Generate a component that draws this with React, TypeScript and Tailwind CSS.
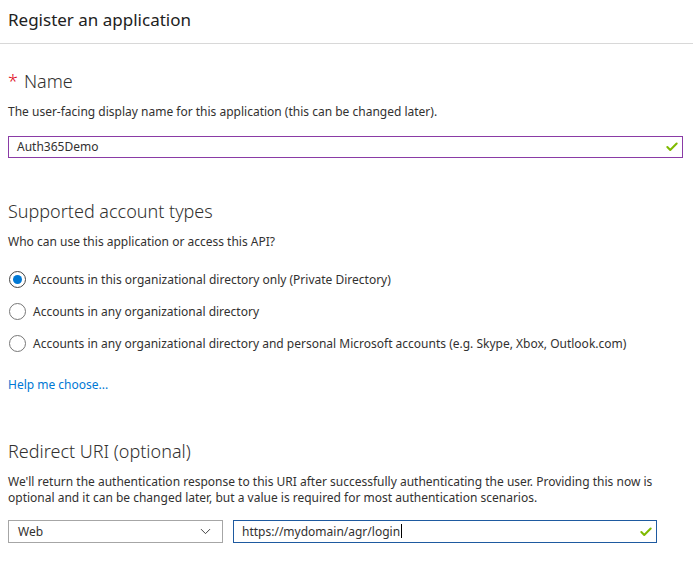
import { ChevronDown, Check } from 'lucide-react';

const accountTypes = [
  { label: 'Accounts in this organizational directory only (Private Directory)', checked: true },
  { label: 'Accounts in any organizational directory', checked: false },
  {
    label:
      'Accounts in any organizational directory and personal Microsoft accounts (e.g. Skype, Xbox, Outlook.com)',
    checked: false,
  },
];

function Radio({ checked }: { checked: boolean }) {
  return (
    <span
      className={
        checked
          ? 'flex h-[17px] w-[17px] shrink-0 items-center justify-center rounded-full border border-[#444] bg-white'
          : 'flex h-[17px] w-[17px] shrink-0 items-center justify-center rounded-full border border-[#777] bg-white'
      }
    >
      {checked && <span className="h-[9px] w-[9px] rounded-full bg-[#0078d4]" />}
    </span>
  );
}

export default function App() {
  return (
    <div className="h-[561px] w-[693px] overflow-hidden bg-white font-['Noto_Sans',sans-serif] text-[#323130]">
      <div className="flex h-[44px] items-center border-b border-[#d8d8d8] px-2 pb-1">
        <h1 className="text-[17px] text-[#212121]">Register an application</h1>
      </div>

      <div className="px-2">
        {/* NAME */}
        <section className="pt-[25px]">
          <h2 className="flex items-baseline text-[18px] font-light leading-[24px]">
            <span className="mr-[6px] text-[#e00b1c]">*</span>
            Name
          </h2>
          <p className="mt-[11px] text-[12px] leading-[16px]">
            The user-facing display name for this application (this can be changed later).
          </p>
          <div className="mt-[16px] flex h-[22px] w-[675px] items-center border border-[#8a3ba6] pl-2 pr-[3px]">
            <span className="flex-1 text-[12px]">Auth365Demo</span>
            <Check className="h-[14px] w-[14px] text-[#7fba00]" strokeWidth={3.5} />
          </div>
        </section>

        {/* ACCOUNT TYPES */}
        <section className="pt-[41px]">
          <h2 className="text-[18px] font-light leading-[24px]">Supported account types</h2>
          <p className="mt-[11px] text-[12px] leading-[16px]">Who can use this application or access this API?</p>
          <div className="mt-[21px] flex flex-col gap-[15px]">
            {accountTypes.map((t) => (
              <label key={t.label} className="flex items-center gap-[7px] pl-px text-[12px] leading-[16px]">
                <Radio checked={t.checked} />
                {t.label}
              </label>
            ))}
          </div>
          <a className="mt-[25px] block text-[12px] leading-[16px] text-[#0078d4]">Help me choose...</a>
        </section>

        {/* REDIRECT URI */}
        <section className="pt-[46px]">
          <h2 className="text-[18px] font-light leading-[24px]">Redirect URI (optional)</h2>
          <p className="mt-[11px] text-[12px] leading-[16px]">
            We'll return the authentication response to this URI after successfully authenticating the user. Providing this now is optional and it can be changed later, but a value is required for most authentication scenarios.
          </p>
          <div className="mt-[14px] flex gap-[10px]">
            <div className="flex h-[23px] w-[215px] items-center border border-[#a6a6a6] pl-[9px] pr-[8px]">
              <span className="flex-1 text-[12px]">Web</span>
              <ChevronDown className="h-[17px] w-[17px] text-[#333]" strokeWidth={1.3} />
            </div>
            <div className="flex h-[23px] w-[424px] items-center border border-[#1e5aa0] pl-2 pr-[3px]">
              <span className="flex-1 text-[12px]">
                https://mydomain/agr/login<span className="ml-px inline-block h-[14px] w-px translate-y-[2px] bg-black" />
              </span>
              <Check className="h-[14px] w-[14px] text-[#7fba00]" strokeWidth={3.5} />
            </div>
          </div>
        </section>
      </div>
    </div>
  );
}
